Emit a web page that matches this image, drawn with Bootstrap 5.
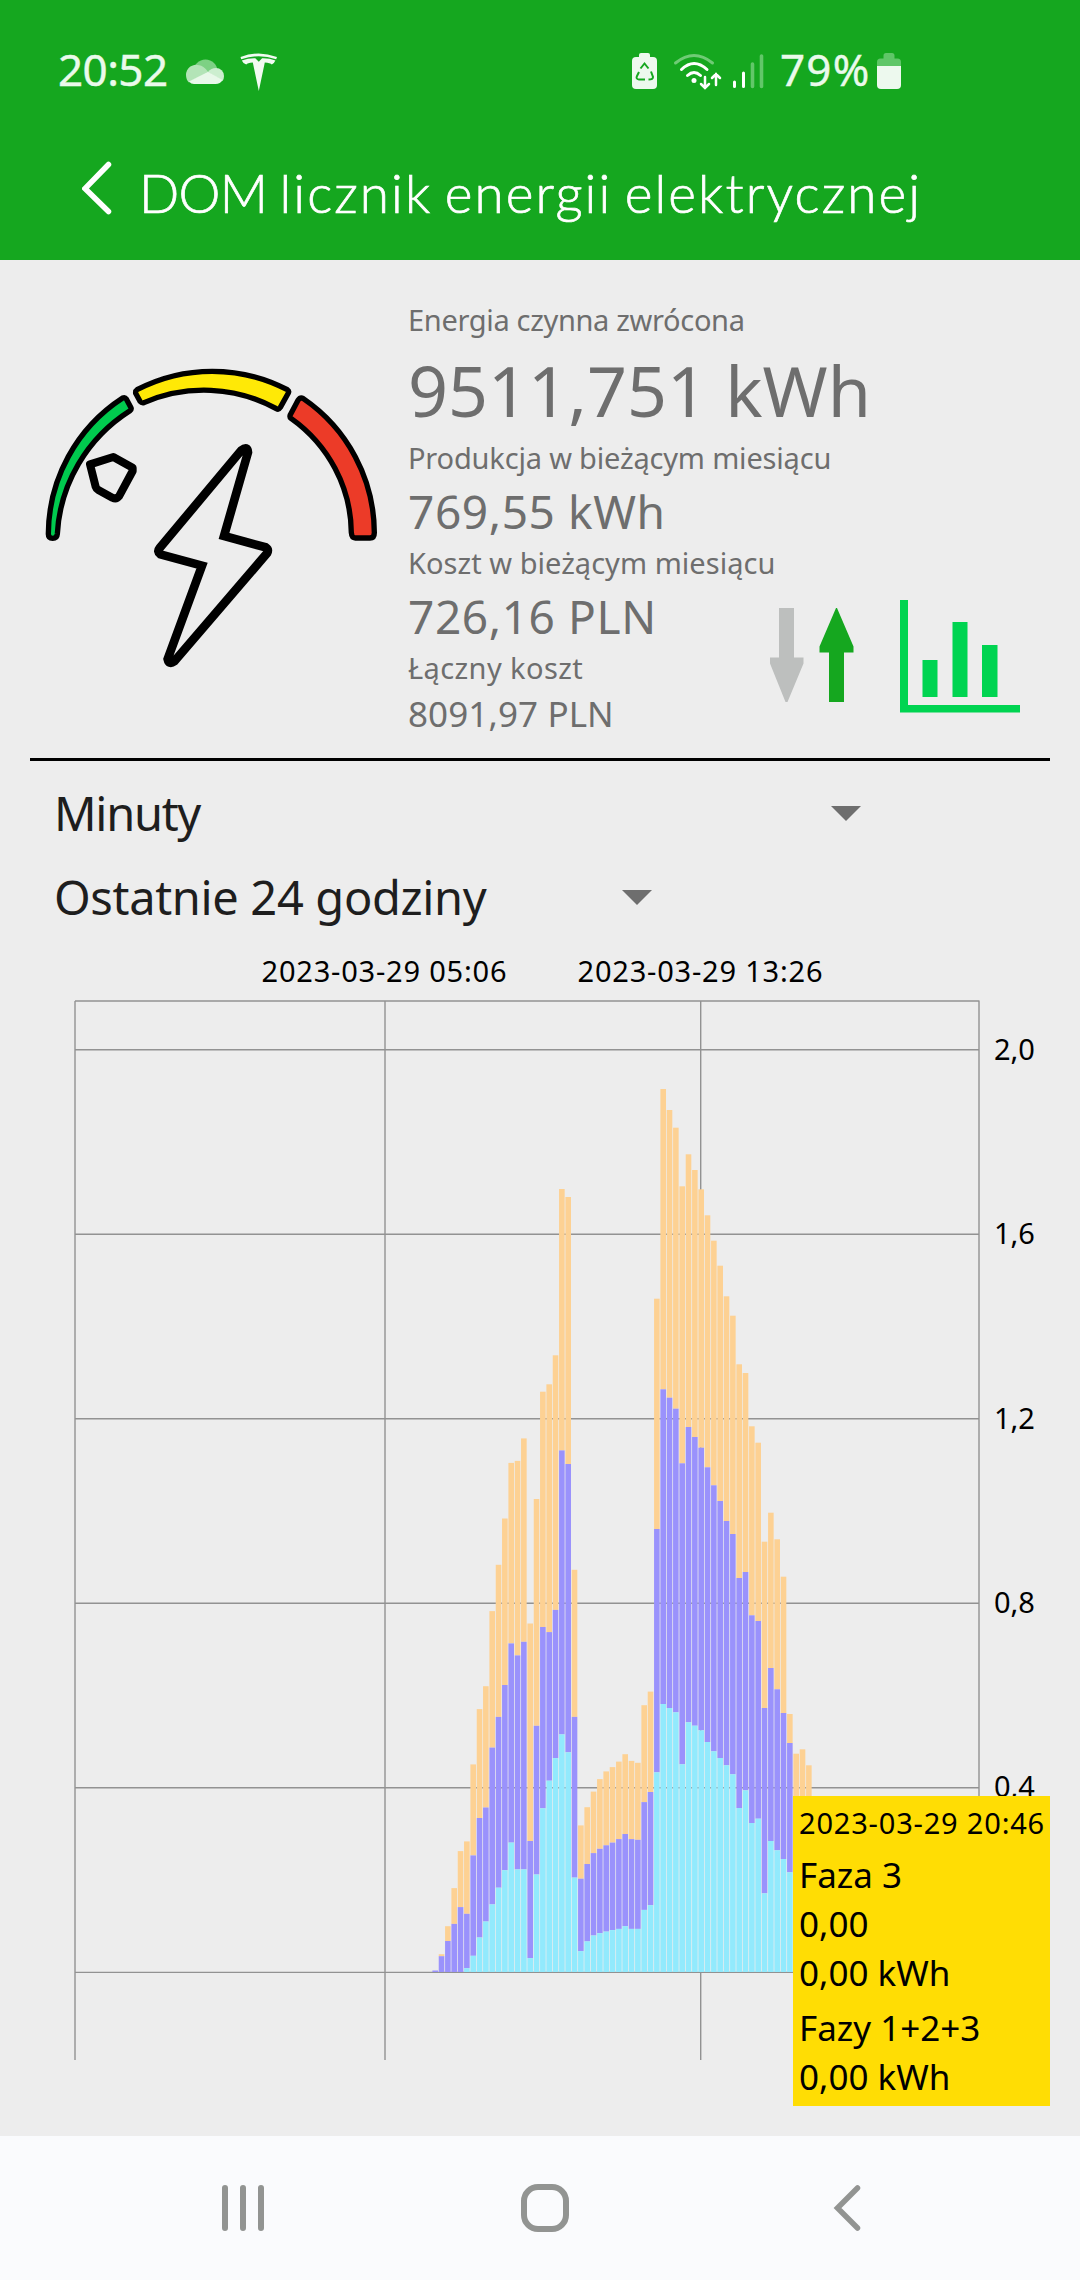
<!DOCTYPE html>
<html lang="pl">
<head>
<meta charset="utf-8">
<meta name="viewport" content="width=device-width, initial-scale=1">
<title>DOM licznik energii elektrycznej</title>
<link href="https://cdn.jsdelivr.net/npm/bootstrap@5.3.0/dist/css/bootstrap.min.css" rel="stylesheet">
<style>
body{width:1080px;height:2280px;overflow:hidden;background:#ededed;font-family:"Noto Sans",sans-serif;color:#000}
svg{display:block;flex:none}
.top-area{height:260px;background:#15a71f;color:#fff}
.status-row{height:142px;padding:39px 179px 0 58px}
.status-txt{font-size:44px;line-height:60px;color:#eafaeb;-webkit-text-stroke:.4px #eafaeb}
.clock-txt{letter-spacing:-.6px;width:122px}
.batt-txt{letter-spacing:1.2px;width:91px}
.title-row{height:118px;padding-left:82px}
.app-title{font-family:Lato,sans-serif;font-weight:300;font-size:53px;line-height:64px;margin:0;padding-top:19px;letter-spacing:2.1px;word-spacing:-4px;-webkit-text-stroke:.7px #fff}
.caps-tight{letter-spacing:-.8px}
.meter-panel{height:498px}
.gauge-art{margin-top:70px}
.info-col{width:361px;padding:40px 0 0 1px;color:#6e6e6e;white-space:nowrap}
.info-icons{margin-top:337px}
.lbl{font-size:29px}
.lbl-1{line-height:40px;letter-spacing:-.33px}
.lbl-2{line-height:37.5px;letter-spacing:-.18px}
.lbl-3{line-height:34.5px;letter-spacing:.04px}
.lbl-4{line-height:31.5px;letter-spacing:.4px}
.val-xl{font-size:70px;line-height:99px;padding-top:1px;margin-bottom:-1px}
.val-md{font-size:46px;letter-spacing:.6px}
.val-sm{font-size:35px;line-height:60px;letter-spacing:.1px}
.rule{height:3px;background:#000;margin:0 30px}
.pick{font-size:47px;color:#1e1e1e;padding:2px 0 0 54px;white-space:nowrap}
.pick-unit{height:103px;letter-spacing:-1.3px}
.pick-unit svg{margin-right:219px}
.pick-range{height:64px;letter-spacing:-.34px}
.pick-range svg{margin-right:428px}
.chart-area{height:1208px}
.chart-area text{font-size:29px}
.tip{left:793px;top:868px;width:257px;height:310px;background:#ffdd04;padding-left:6px;white-space:nowrap;font-size:35px}
.tip-date{font-size:29px;line-height:54px;letter-spacing:.81px}
.nav-strip{height:144px;background:#fafbfd}
</style>
</head>
<body>
<div class="d-flex flex-column">
<header class="top-area">
  <div class="status-row d-flex justify-content-between">
    <div class="d-flex">
      <span class="status-txt clock-txt">20:52</span>
      <svg width="100" height="60" viewBox="180 39 100 60"><circle cx="205.500" cy="71.500" r="12" fill="#7dd184"/><path d="M186 75a10 10 0 0 1 13-9.800q4-.2 9 6.500L189 82.500q-3-3-3-7.500z" fill="#b3e4b7"/><path d="M208 72q3-4 8-4a8 8 0 0 1 8 8q0 3-1.500 5z" fill="#cceecf"/><path d="M189 81.500l19-9.800L222.500 80q-2 4-7 4H194q-3 0-5-2.500z" fill="#e8f8e9"/>
      <path d="M240.500 57q18-7 36.500 0l-.8 2.300q-17.500-6-35 0zM241.800 60.500q7-2.600 13.500-2.300l3.500 3.500 3.300-3.500q7-.2 13.300 2.300-1 2.500-3.600 4-1.500-1.600-7-2l-6 28.500-6-28.500q-5.500.4-6.500 2-3.500-1.200-4.500-4z" fill="#f2fbf2"/></svg>
    </div>
    <div class="d-flex">
      <svg width="152" height="60" viewBox="627 39 152 60">
        <rect x="631" y="57" width="25" height="32" rx="4" fill="#edf9ee"/><rect x="638" y="53" width="11" height="8" rx="2" fill="#edf9ee"/>
        <path d="M639.500 68.500l4-5 4 5M650 71.500l2 5.500q0 2.500-4.500 2.500M644 79.500h-6q-3.500-.5-2-3.500l2-4" fill="none" stroke="#15a71f" stroke-width="2"/>
        <g fill="none" stroke="#fff" stroke-linecap="round" stroke-width="3"><path d="M674.500 63q18.500-15 37 0" stroke="#6fcb75"/><path d="M680.500 69.500q12.500-12 25.500 0M686.500 75.500q6.500-6 13 0"/><path d="M704 77v10M700 84l4 4 4-4M715 85V74M711 78l4-4 4 4" stroke-width="2.500"/><path d="M733.500 82v4.500M742.500 73v13.500"/><path d="M751.500 64v22.500M760.500 56v30.500" stroke="#62c769" stroke-width="3.600"/></g><circle cx="693" cy="80.500" r="2.500" fill="#fff"/></svg>
      <span class="status-txt batt-txt">79%</span>
      <svg width="30" height="60" viewBox="871 39 30 60"><path d="M877 68v-6q0-3.500 3.500-3.500h3v-3q0-2.500 2.500-2.500h6q2.500 0 2.500 2.500v3h3q3.500 0 3.500 3.500v6z" fill="#5fc667"/><path d="M877 66h24v19q0 4-4 4h-16q-4 0-4-4z" fill="#edf9ee"/></svg>
    </div>
  </div>
  <div class="title-row d-flex">
    <svg width="57" height="80" viewBox="82 142 57 80"><path d="M108.500 164.500L85 188.500l23.500 23" fill="none" stroke="#fff" stroke-width="5.500" stroke-linecap="round"/></svg>
    <h1 class="app-title"><span class="caps-tight">DOM</span> licznik energii elektrycznej</h1>
  </div>
</header>
<main>
  <section class="meter-panel d-flex">
    <svg class="gauge-art" width="407" height="380" viewBox="0 0 1221 1140" stroke="#000" stroke-width="16" stroke-linejoin="round">
      <path d="M145 612A489 489 0 0 1 368 204Q375 201 379 207L393 233Q395 238 390 242A480 470 0 0 0 172 612Q171 625 158 625Q145 625 145 612Z" fill="#00ca4e"/>
      <path d="M411 179A489 489 0 0 1 862 179Q868 183 865 189L841 232Q836 240 829 236A441 429 0 0 0 432 218Q425 220 420 214L407 190Q406 182 411 179Z" fill="#ffe906"/>
      <path d="M910 206A489 489 0 0 1 1123 608Q1123 624 1110 624H1066Q1055 624 1054 608A441 429 0 0 0 873 265Q868 261 871 254L894 211Q901 201 910 206Z" fill="#ec3b28"/>
      <path d="M340 381L398 413V423L357 499Q349 509 337 503L295 480Q289 476 287 470L270 403Z" fill="none" stroke-width="24"/>
      <path d="M724 361Q743 346 744 367L672 618L797 652Q807 659 801 670L523 994Q507 1006 503 987L606 707L481 673Q470 665 479 654Z" fill="none" stroke-width="26" stroke-linejoin="miter"/>
    </svg>
    <div class="info-col flex-shrink-0">
      <div class="lbl lbl-1">Energia czynna zwrócona</div>
      <div class="val-xl">9511,751 kWh</div>
      <div class="lbl lbl-2">Produkcja w bieżącym miesiącu</div>
      <div class="val-md" style="line-height:69px">769,55 kWh</div>
      <div class="lbl lbl-3">Koszt w bieżącym miesiącu</div>
      <div class="val-md" style="line-height:72px">726,16 PLN</div>
      <div class="lbl lbl-4">Łączny koszt</div>
      <div class="val-sm">8091,97 PLN</div>
    </div>
    <svg class="info-icons" width="264" height="120" viewBox="768 597 264 120">
      <path d="M779 608h15v49.500h9.500v6L787.500 702h-2L770 663.500v-6h9z" fill="#bdbfbe"/><path d="M829 702h15v-49.500h9.500v-6L837 608h-1l-16.500 38.500v6h9.500z" fill="#15a71f"/>
      <path d="M900 600h8v105h112v7.500H900zM922.500 660h15v37h-15zM952.500 622h15v75h-15zM982 645h15.500v52H982z" fill="#00d451"/>
    </svg>
  </section>
  <div class="rule"></div>
  <div class="pick pick-unit d-flex align-items-center"><span>Minuty</span><svg class="ms-auto" width="30" height="15"><path d="M0 0h30L15 15z" fill="#6e6e6e"/></svg></div>
  <div class="pick pick-range d-flex align-items-center"><span>Ostatnie 24 godziny</span><svg class="ms-auto" width="30" height="15"><path d="M0 0h30L15 15z" fill="#6e6e6e"/></svg></div>
  <section class="chart-area position-relative">
    <svg width="1080" height="1208" viewBox="0 928 1080 1208">
      <path d="M75 1001H979.500M75 1049.800H979M75 1234.200H979M75 1418.700H979M75 1603.200H979M75 1787.800H979M75 1972.400H979M75 1001V2060M385 1001V2060M700.700 1001V2060M979 1001V2060" stroke="#929292" stroke-width="1.400"/>
      <g id="bars"></g>
      <text x="261.500" y="982" textLength="245">2023-03-29 05:06</text><text x="577.500" y="982" textLength="245">2023-03-29 13:26</text>
      <text x="994" y="1059.500">2,0</text><text x="994" y="1243.500">1,6</text><text x="994" y="1428.500">1,2</text><text x="994" y="1612.500">0,8</text><text x="994" y="1797">0,4</text>
    </svg>
    <div class="tip position-absolute">
      <div class="tip-date">2023-03-29 20:46</div>
      <div style="line-height:50px">Faza 3</div>
      <div style="line-height:48px">0,00</div>
      <div style="line-height:50px">0,00 kWh</div>
      <div style="line-height:59px">Fazy 1+2+3</div>
      <div style="line-height:39px">0,00 kWh</div>
    </div>
  </section>
</main>
<footer class="nav-strip">
  <svg width="1080" height="144" viewBox="0 2136 1080 144" fill="none" stroke="#929492" stroke-linecap="round" stroke-width="6"><path d="M225 2188v40M243 2188v40M261 2188v40"/><rect x="524" y="2187" width="42" height="42" rx="14"/><path d="M857.500 2188l-20 20 20 20" stroke-width="5.500"/></svg>
</footer>
</div>
<script src="https://cdn.jsdelivr.net/npm/bootstrap@5.3.0/dist/js/bootstrap.bundle.min.js"></script>
<script>
// Top edge of each stacked phase (orange, violet, cyan) per ten-minute slot
const slots=[[1972,1970.5,1972],[1954.2,1956.2,1972],[1926.2,1941,1972],[1888.1,1923.9,1972],[1851.1,1907.1,1972],[1841.4,1913.8,1968.2],[1764.4,1855.4,1955.8],[1709.1,1818,1937.5],[1686.2,1807.5,1921.5],[1611.1,1747.6,1904.4],[1564.8,1716.9,1887.7],[1518.5,1685,1870.2],[1462.9,1643.4,1842.6],[1460.9,1655.4,1869.4],[1438.4,1641.8,1869.4],[1623.5,1841,1958.1],[1499,1725.8,1874.5],[1391.7,1627,1808.3],[1384.3,1632.1,1780.7],[1355.3,1609.9,1758.1],[1189,1450.4,1734.4],[1197,1464,1752.3],[1569.8,1716.9,1877.6],[1825.4,1878.7,1951.1],[1807.2,1864,1941.4],[1791.6,1853.1,1935.5],[1779.1,1848.8,1933.2],[1771.4,1845.3,1931.6],[1767.1,1842.6,1930.1],[1761.6,1839.1,1928.9],[1754.2,1834,1926.2],[1760.9,1839.1,1928.9],[1762.8,1839.8,1928.9],[1705.2,1802.1,1909.9],[1691.6,1792,1905.2],[1298.7,1529,1772.3],[1089,1389.3,1704],[1110,1397.7,1708],[1127.7,1408.7,1712.3],[1186.3,1463.3,1764.3],[1154.3,1427,1722.3],[1170,1437,1725.7],[1189.3,1447.7,1730.3],[1215.3,1467.3,1742],[1240.7,1485.3,1751.3],[1265.7,1501,1758],[1296.3,1521,1765.3],[1315.7,1534,1774.3],[1364.3,1578,1808],[1373,1572,1790.3],[1426.3,1615.3,1823],[1442.7,1621,1818.7],[1541.7,1708,1893.3],[1512.7,1668,1841],[1539.3,1689.3,1850.3],[1576.7,1713,1859],[1714,1743,1872.3],[1753.7,1830,1900],[1749.3,1830,1900],[1765.3,1840,1910]];
const base=1972,colors=["#fdd193","#9a92fc","#92eafd"];
let out="";
slots.forEach((t,i)=>{const x=(432.4+i*6.333).toFixed(2);
  t.forEach((y,k)=>{const end=k<2?t[k+1]:base;if(end>y)out+=`<rect x="${x}" y="${y}" width="5.6" height="${(end-y).toFixed(1)}" fill="${colors[k]}"/>`});});
document.getElementById("bars").innerHTML=out;
</script>
</body>
</html>
